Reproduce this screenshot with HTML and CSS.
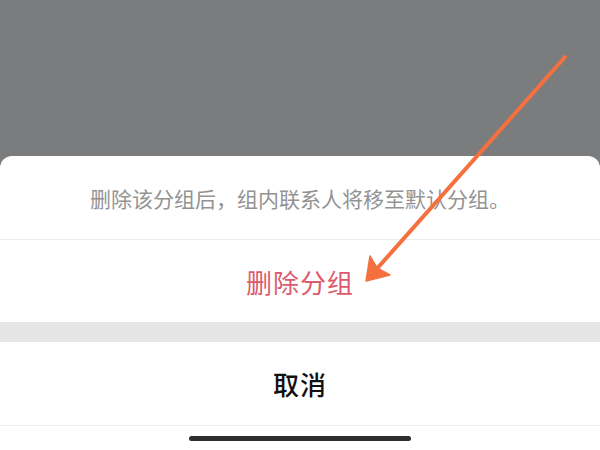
FILE: index.html
```html
<!DOCTYPE html>
<html lang="zh-CN">

<head>
    <meta charset="UTF-8">
    <meta name="viewport" content="width=device-width, initial-scale=1.0">
    <title>删除分组</title>
    <link rel="stylesheet" href="styles.css">
</head>

<body>
    <div class="mask"></div>

    <div class="sheet">
        <div class="row msg">删除该分组后，组内联系人将移至默认分组。</div>
        <div class="row action danger">删除分组</div>
        <div class="gap"></div>
        <div class="row action cancel">取消</div>
        <div class="home"><span class="home-bar"></span></div>
    </div>

    <!-- arrow drawn over the sheet -->
    <svg class="arrow" width="600" height="450" viewBox="0 0 600 450">
        <line x1="565" y1="57" x2="374" y2="272" stroke="#f4703f" stroke-width="4" stroke-linecap="round" />
        <polygon points="366,281 370,256 377,268 390,275" fill="#f4703f" stroke="#f4703f" stroke-width="1.5" stroke-linejoin="round" />
    </svg>
</body>

</html>
```

FILE: styles.css
```css
* {
    box-sizing: border-box;
}

html,
body {
    margin: 0;
    height: 450px;
}

body {
    position: relative;
    display: flex;
    flex-direction: column;
    background: #7b7c7d;
    font-family: "Noto Sans CJK SC", "Noto Sans", sans-serif;
    overflow: hidden;
}

.mask {
    height: 156px;
    flex-shrink: 0;
}

.sheet {
    flex: 1;
    display: flex;
    flex-direction: column;
    background: #fff;
    border-radius: 12px 12px 0 0;
}

.row {
    display: flex;
    align-items: center;
    justify-content: center;
}

.msg {
    height: 84px;
    border-bottom: 1px solid #ececec;
    font-size: 21px;
    color: #939393;
}

.action {
    height: 82px;
    font-size: 26px;
    letter-spacing: 1px;
}

.danger {
    color: #dd5a6e;
}

.gap {
    height: 20px;
    background: #e5e5e5;
}

.cancel {
    height: 84px;
    border-bottom: 1px solid #ececec;
    color: #111;
    font-weight: 500;
}

.home {
    flex: 1;
    display: flex;
    justify-content: center;
    padding-top: 10px;
}

.home-bar {
    width: 222px;
    height: 5px;
    border-radius: 3px;
    background: #2e2e2e;
}

.arrow {
    position: absolute;
    left: 0;
    top: 0;
}
```
